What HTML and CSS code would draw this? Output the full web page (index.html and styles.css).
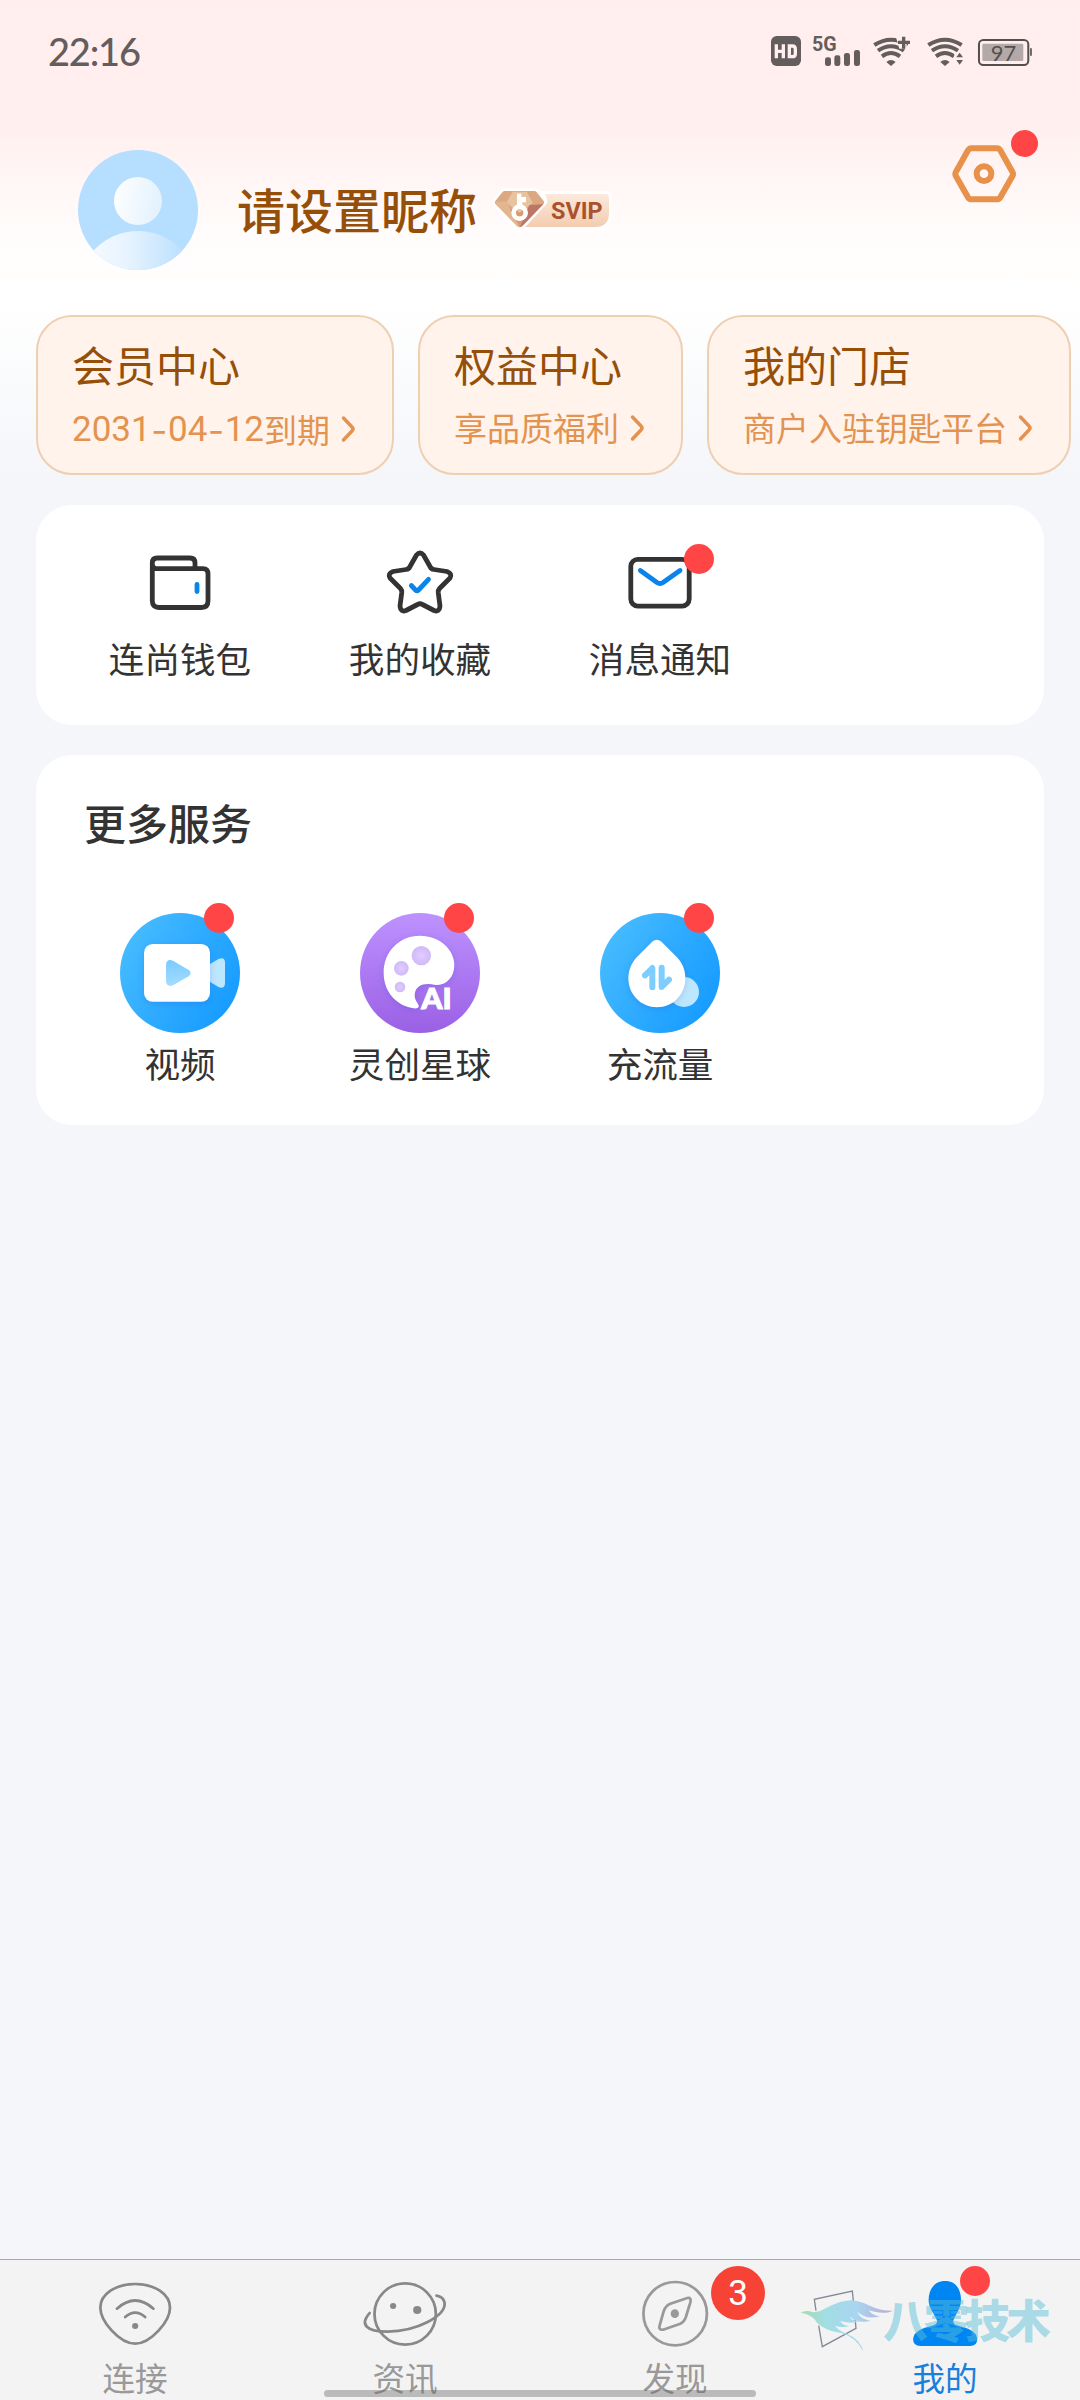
FILE: index.html
```html
<!DOCTYPE html>
<html lang="zh-CN">
<head>
<meta charset="utf-8">
<title>我的</title>
<link rel="stylesheet" href="styles.css">
</head>
<body>
<header class="status">
  <span class="clock">22:16</span>
  <svg class="status-icons" viewBox="90 90 790 120" fill="#645d5d">
    <rect x="93" y="108" width="90" height="90" rx="17"/>
    <path d="M109 133v42M130 133v42M109 154h21M148 138v32h9q9 0 9-9v-14q0-9-9-9z" fill="none" stroke="#ffefee" stroke-width="10"/>
    <text x="216" y="152" class="net" textLength="74" lengthAdjust="spacingAndGlyphs">5G</text>
    <rect x="255" y="172" width="18" height="26" rx="7"/>
    <rect x="283" y="166" width="18" height="32" rx="7"/>
    <rect x="312" y="159" width="18" height="39" rx="7"/>
    <rect x="342" y="150" width="18" height="48" rx="7"/>
    <g fill="none" stroke="#645d5d" stroke-width="12">
      <path d="M403 135q50-32 100 0M414 152q39-27 78 0M426 169q27-20 54 0"/>
      <path d="M439 186q14-12 28 0l-14 12z" fill="#645d5d" stroke="none"/>
    </g>
    <path d="M466 104h34v42h-22z" fill="#ffefee"/>
    <path d="M474 127h36M491 110v36" stroke="#645d5d" stroke-width="10"/>
    <g fill="none" stroke="#645d5d" stroke-width="12">
      <path d="M565 135q50-32 100 0M576 152q39-27 78 0M588 169q27-20 54 0"/>
      <path d="M601 186q14-12 28 0l-14 12z" fill="#645d5d" stroke="none"/>
    </g>
    <path d="M643 156h32v42h-32z" fill="#ffefee"/>
    <path d="M649 172l10-14 10 14zM649 180l10 14 10-14z"/>
    <rect x="717" y="120" width="148" height="75" rx="13" fill="none" stroke="#544f4f" stroke-width="6"/>
    <rect x="727" y="131" width="123" height="52" rx="4" fill="#b3a9a9"/>
    <path d="M873 145v22" stroke="#544f4f" stroke-width="5"/>
    <text x="791" y="182" text-anchor="middle" class="batt">97</text>
  </svg>
</header>

<section class="profile">
  <svg class="avatar" viewBox="0 0 120 120">
    <defs>
      <linearGradient id="head" x1="0" x2="1" y2=".2"><stop stop-color="#fff"/><stop offset="1" stop-color="#e4f2fd"/></linearGradient>
      <linearGradient id="body" x1=".1" x2=".9"><stop stop-color="#f5faff"/><stop offset=".4" stop-color="#e6f3fe"/><stop offset="1" stop-color="#b9dffe"/></linearGradient>
      <clipPath id="disc"><circle cx="60" cy="60" r="60"/></clipPath>
    </defs>
    <circle cx="60" cy="60" r="60" fill="#b5deff"/>
    <circle cx="60" cy="51" r="24" fill="url(#head)"/>
    <circle cx="60" cy="141" r="60" fill="url(#body)" clip-path="url(#disc)"/>
  </svg>
  <h1 class="name">请设置昵称</h1>
  <svg class="svip" viewBox="96 84 366 132">
    <defs>
      <linearGradient id="tag" x2="0" y2="1"><stop stop-color="#fdeadc"/><stop offset="1" stop-color="#f3ccaf"/></linearGradient>
    </defs>
    <path d="M190 93H439q17 0 17 17v49q0 51-51 51H172z" fill="#fff"/>
    <path d="M130 86H227q6 0 10 5l22 28q5 7 0 13L196 207q-17 9-34 0L99 135q-4-7 0-13l21-30q4-6 10-6z" fill="#fff"/>
    <path d="M255 102H436q11 0 11 11v46q0 42-42 42H196L260 131q5-6 1-13z" fill="url(#tag)"/>
    <path d="M135 93H222q5 0 8 4l21 26q3 4 0 8L187 198q-8 7-16 0L106 131q-3-4 0-8l21-26q3-4 8-4z" fill="#dba882"/>
    <path d="M106 131q-2-4 0-6L138 124l41 77q-5 0-8-3z" fill="#e3b590"/>
    <path d="M250 133L187 198q-4 3-8 3l29-66z" fill="#bd7566"/>
    <path d="M150 146l29 55 22-48z" fill="#d99a72"/>
    <path d="M158 95h42l18 33-39 30-40-30z" fill="#e9c29f"/>
    <circle cx="179" cy="158" r="18" fill="none" stroke="#fff" stroke-width="14"/>
    <path d="M171 142V101h13v10h14v16h-11v15z" fill="#fff"/>
    <text x="273" y="177" class="svip-text" textLength="155" lengthAdjust="spacingAndGlyphs">SVIP</text>
  </svg>
  <div class="settings">
    <svg viewBox="630 429 204 186" fill="none" stroke="#e8914a" stroke-width="18">
      <path d="M694 445H771q6 0 10 6l36 64q4 7 0 14L781 592q-4 6-10 6H694q-6 0-10-6L648 529q-4-7 0-14L684 451q4-6 10-6z"/>
      <circle cx="732" cy="521" r="22"/>
    </svg>
    <i class="dot"></i>
  </div>
</section>

<nav class="cards">
  <a class="card">
    <b>会员中心</b>
    <span><em>2031<i>-</i>04<i>-</i>12</em>到期<svg viewBox="0 0 16 28"><path d="M2.5 3L11 12q2 2 0 4L2.5 25"/></svg></span>
  </a>
  <a class="card">
    <b>权益中心</b>
    <span>享品质福利<svg viewBox="0 0 16 28"><path d="M2.5 3L11 12q2 2 0 4L2.5 25"/></svg></span>
  </a>
  <a class="card">
    <b>我的门店</b>
    <span>商户入驻钥匙平台<svg viewBox="0 0 16 28"><path d="M2.5 3L11 12q2 2 0 4L2.5 25"/></svg></span>
  </a>
</nav>

<section class="panel quick">
  <a class="item">
    <svg class="line" viewBox="0 0 72 72">
      <path d="M8.3 24V17q0-5 5-5H46q5 0 5 5V22.5M8.3 18q0 4.700 5 4.700H59q5 0 5 5.300V55q0 6.500-6.500 6.500H15q-6.700 0-6.700-6.700z"/>
      <path class="blue" d="M53 38.500V45.500"/>
    </svg>
    <span>连尚钱包</span>
  </a>
  <a class="item">
    <svg class="line" viewBox="0 0 72 72">
      <path d="M32.500 9Q36 5 39.500 9L46 20.500Q47 23 50 23.500L63 25.500Q68.500 27.500 66 32L55.500 42.500Q54 44 54.300 47L56 60Q55.500 66.500 50 64.500L38.500 58.500Q36 57 33.500 58.500L22 64.500Q16.500 66.500 16 60L17.700 47Q18 44 16.500 42.500L6 32Q3.500 27.500 9 25.500L22 23.500Q25 23 26 20.500Z"/>
      <path class="blue" d="M27.300 39.500L31.500 44Q33 45.500 34.500 44L44.500 33.300"/>
    </svg>
    <span>我的收藏</span>
  </a>
  <a class="item">
    <svg class="line" viewBox="0 0 72 72">
      <rect x="6.800" y="13.300" width="58.400" height="46.800" rx="7"/>
      <path class="blue" d="M16.300 24.500L33 36.500Q36 38.500 39 36.500L56 24.500"/>
    </svg>
    <span>消息通知</span>
    <i class="dot"></i>
  </a>
</section>

<section class="panel more">
  <h2>更多服务</h2>
  <div class="grid">
    <a class="item">
      <svg class="round" viewBox="180 399 360 360">
        <defs>
          <linearGradient id="blue" x1="0" y1=".2" x2="1" y2=".8"><stop stop-color="#48bcff"/><stop offset="1" stop-color="#149aff"/></linearGradient>
          <linearGradient id="play" x2="0" y2="1"><stop stop-color="#7bcaff"/><stop offset="1" stop-color="#a4ddff"/></linearGradient>
        </defs>
        <circle cx="360" cy="579" r="180" fill="url(#blue)"/>
        <path d="M449 553l28-17q18-6 18 12v61q0 18-18 13l-28-17z" fill="#bde6ff"/>
        <rect x="252" y="492" width="198" height="173" rx="26" fill="#fff" class="lift"/>
        <path d="M318 554q2-19 21-12l47 28q12 9 0 19l-47 27q-19 7-21-12z" fill="url(#play)"/>
      </svg>
      <span>视频</span>
      <i class="dot"></i>
    </a>
    <a class="item">
      <svg class="round" viewBox="120 99 360 360">
        <defs>
          <linearGradient id="violet" x2="0" y2="1"><stop stop-color="#bd92ff"/><stop offset="1" stop-color="#9b60e5"/></linearGradient>
          <radialGradient id="hole"><stop stop-color="#e2cdff"/><stop offset="1" stop-color="#cebaf8"/></radialGradient>
        </defs>
        <circle cx="300" cy="279" r="180" fill="url(#violet)"/>
        <path class="lift" fill="#fff" d="M300 167C360 167 403 210 403 254C403 292 379 316 346 315C318 308 286 312 284 345C283 362 298 372 296 380Q294 388 276 384C226 374 191 333 191 278C191 215 238 167 300 167z"/>
        <circle cx="304" cy="227" r="29" fill="url(#hole)"/>
        <circle cx="244" cy="265" r="22" fill="url(#hole)"/>
        <circle cx="240" cy="321" r="16" fill="url(#hole)"/>
        <text x="304" y="386" class="ai" textLength="91" lengthAdjust="spacingAndGlyphs">AI</text>
      </svg>
      <span>灵创星球</span>
      <i class="dot"></i>
    </a>
    <a class="item">
      <svg class="round" viewBox="840 99 360 360">
        <circle cx="1020" cy="279" r="180" fill="url(#blue)"/>
        <circle cx="1092" cy="336" r="45" fill="#bde7ff"/>
        <path class="lift" fill="#fff" d="M998 184q12-10 25 0l48 48c16 17 25 38 25 63 0 49-37 87-85 87s-86-38-86-87c0-25 10-46 25-63z"/>
        <path d="M975 286L997 264V322M1025 263V321L1047 299" fill="none" stroke="#7dcdff" stroke-width="18" stroke-linecap="round" stroke-linejoin="round"/>
      </svg>
      <span>充流量</span>
      <i class="dot"></i>
    </a>
  </div>
</section>

<footer class="tabs">
  <a class="tab">
    <svg viewBox="261 114 261 210" preserveAspectRatio="none">
      <path d="M392 132C448 132 493 162 493 203C493 243 438 311 392 311C346 311 291 243 291 203C291 162 336 132 392 132z"/>
      <path d="M339 206Q392 157 445 206M363 231Q392 205 421 231" stroke-linecap="round"/>
      <circle cx="392" cy="258" r="9" class="solid"/>
    </svg>
    <span>连接</span>
  </a>
  <a class="tab">
    <svg viewBox="1045 114 261 210" preserveAspectRatio="none">
      <ellipse cx="1176" cy="222" rx="89" ry="92"/>
      <path d="M1073 219C1043 254 1064 275 1125 275C1208 274 1297 228 1290 187Q1286 170 1267 167" stroke-linecap="round"/>
      <circle cx="1141" cy="198" r="9" class="solid"/><circle cx="1211" cy="210" r="12" class="solid"/>
    </svg>
    <span>资讯</span>
  </a>
  <a class="tab light">
    <svg viewBox="261 114 261 210" preserveAspectRatio="none">
      <ellipse cx="392" cy="221" rx="92" ry="95"/>
      <path d="M378 191L427 174Q440 172 436 187L423 231Q418 246 407 251L357 269Q343 271 347 256L359 213Q364 197 378 191z"/>
      <ellipse cx="391" cy="221" rx="12" ry="13" class="solid"/>
    </svg>
    <span>发现</span>
    <i class="count">3</i>
  </a>
  <a class="tab active">
    <svg viewBox="1045 114 261 210" preserveAspectRatio="none">
      <path d="M1176 123C1206 123 1222 147 1222 180C1222 205 1207 221 1199 243C1200 259 1218 256 1244 267Q1268 279 1269 297Q1269 318 1248 318H1104Q1083 318 1083 297Q1084 279 1108 267C1134 256 1152 259 1153 243C1145 221 1128 205 1128 180C1128 147 1146 123 1176 123z"/>
    </svg>
    <span>我的</span>
    <i class="dot"></i>
  </a>
  <div class="watermark">
    <svg viewBox="60 114 288 198">
      <defs>
        <linearGradient id="bird"><stop stop-color="#a5dcb0"/><stop offset=".28" stop-color="#a2dde4"/><stop offset=".6" stop-color="#a8d6f0"/><stop offset="1" stop-color="#b9abd4"/></linearGradient>
      </defs>
      <path d="M108 182L103 148L217 123L228 235L127 290L116 227" fill="none" stroke="#838997" stroke-width="4"/>
      <path fill="url(#bird)" d="M62 188Q78 179 100 187L119 184C153 167 174 153 213 151C263 153 274 184 339 182C315 193 291 188 266 181C276 194 286 197 300 199C267 207 252 201 232 186C238 200 250 209 272 212C247 220 225 213 209 200C212 207 222 213 240 214C213 222 194 216 180 213Q188 226 208 229C186 234 173 229 165 228Q178 244 197 250Q240 267 251 306Q229 263 187 250Q121 240 104 208Q91 193 62 188z"/>
    </svg>
    <span>八零技术</span>
  </div>
  <div class="homebar"></div>
</footer>
</body>
</html>
```
FILE: styles.css
```css
* { box-sizing: border-box; }
body {
  margin: 0;
  width: 1080px;
  height: 2400px;
  overflow: hidden;
  display: flex;
  flex-direction: column;
  font-family: "Noto Sans CJK SC", sans-serif;
  color: #333;
  background: linear-gradient(#ffeeed 0, #ffefee 120px, #fffdfc 240px, #fff 300px, #f4f6fa 475px, #f4f6fa);
}
svg { display: block; flex: none; overflow: visible; }
i, em { font-style: normal; }
h1, h2 { margin: 0; }
.dot {
  position: absolute;
  width: 30px;
  height: 30px;
  border-radius: 50%;
  background: #ff4545;
}

.status {
  height: 102px;
  padding: 30px 47px 0 48px;
  display: flex;
  justify-content: space-between;
}
.clock { font: 500 38px/42px Lato, sans-serif; color: #645d5d; letter-spacing: -1.2px; }
.status-icons { width: 263.3px; height: 40px; }
.net { font: 700 60px Roboto, sans-serif; }
.batt { font: 400 66px Lato, sans-serif; fill: #544f4f; }

.profile {
  height: 213px;
  padding: 48px 48px 0 78px;
  display: flex;
  align-items: flex-start;
}
.avatar { width: 120px; height: 120px; }
.name { margin: 22px 0 0 39px; font-size: 48px; line-height: 72px; font-weight: 500; color: #964f08; }
.svip { width: 122px; height: 44px; margin: 38px 0 0 15px; }
.svip-text { font: 700 73px Roboto, sans-serif; fill: #a9522f; }
.settings { position: relative; margin: -7px 0 0 auto; width: 82px; height: 62px; }
.settings svg { width: 68px; height: 62px; }
.settings .dot { width: 27px; height: 27px; left: 61px; top: -13px; }

.cards { display: flex; gap: 24px; padding: 0 0 0 36px; height: 160px; }
.card {
  flex: none;
  border: 2px solid #efcfb1;
  border-radius: 36px;
  background: #fff3ec;
  padding: 15px 35px 0 34px;
}
.card b { display: block; font-size: 42px; line-height: 64px; font-weight: 400; color: #964f08; }
.card span { display: flex; align-items: center; font-size: 33px; line-height: 62px; color: #e3934f; }
.card em { font-family: Roboto, sans-serif; font-size: 35px; width: 192px; margin-top: 3px; display: flex; justify-content: space-between; }
.card em i { width: 20px; text-align: center; font-family: Inter, sans-serif; }
.card svg { width: 16px; height: 28px; margin: 1px 0 0 11px; fill: none; stroke: #e3934f; stroke-width: 3.500; stroke-linecap: round; }

.panel { margin: 30px 36px 0; border-radius: 36px; background: #fff; }
.quick { height: 220px; padding: 41px 24px 0; display: grid; grid-template-columns: repeat(4, 1fr); }
.item { position: relative; display: flex; flex-direction: column; align-items: center; font-size: 35.6px; }
.line { width: 72px; height: 72px; fill: none; stroke: #333; stroke-width: 4.800; stroke-linejoin: round; }
.line .blue { stroke: #0a84ea; stroke-linecap: round; }
.quick .item span { margin-top: 13px; line-height: 54px; }
.quick .dot { left: 144px; top: -2px; }

.more { height: 370px; padding: 36px 24px 0; }
.more h2 { margin-left: 24px; font-size: 42px; line-height: 62px; font-weight: 500; }
.grid { display: grid; grid-template-columns: repeat(4, 1fr); margin-top: 60px; }
.round { width: 120px; height: 120px; }
.lift { filter: drop-shadow(0 5px 9px rgba(40, 60, 200, .2)); }
.grid span { margin-top: 3px; line-height: 54px; }
.grid .dot { left: 144px; top: -10px; }
.ai { font: 900 86px Lato, sans-serif; fill: #fff; stroke: #fff; stroke-width: 3; }

.tabs {
  position: relative;
  margin-top: auto;
  height: 141px;
  border-top: 1px solid #aaa;
  background: #f3f3f3;
  display: grid;
  grid-template-columns: repeat(4, 1fr);
}
.tab { position: relative; display: flex; flex-direction: column; align-items: center; padding-top: 18px; color: #999; }
.tab svg { width: 90px; height: 70px; fill: none; stroke: #888; stroke-width: 8; }
.tab .solid { fill: #888; stroke: none; }
.light svg { stroke: #999; }
.light .solid { fill: #999; }
.tab span { font-size: 32.6px; line-height: 48px; margin-top: 5px; }
.tab.active { color: #1a7fdc; }
.active svg { fill: #0086f3; stroke: none; }
.active .dot { left: 150px; top: 6px; }
.count {
  position: absolute;
  left: 171px;
  top: 6px;
  width: 54px;
  height: 54px;
  border-radius: 50%;
  background: #f74336;
  color: #fff;
  font: 400 35px/56px Roboto, sans-serif;
  text-align: center;
}
.watermark { position: absolute; left: 800px; top: 28px; display: flex; }
.watermark svg { width: 96px; height: 66px; }
.watermark span { margin: 1px 0 0 -13px; font-size: 45px; line-height: 60px; font-weight: 900; letter-spacing: -4px; color: rgba(88, 190, 216, .49); }
.homebar { position: absolute; left: 324px; top: 130px; width: 432px; height: 7px; border-radius: 4px; background: rgba(100, 100, 100, .4); }
```
